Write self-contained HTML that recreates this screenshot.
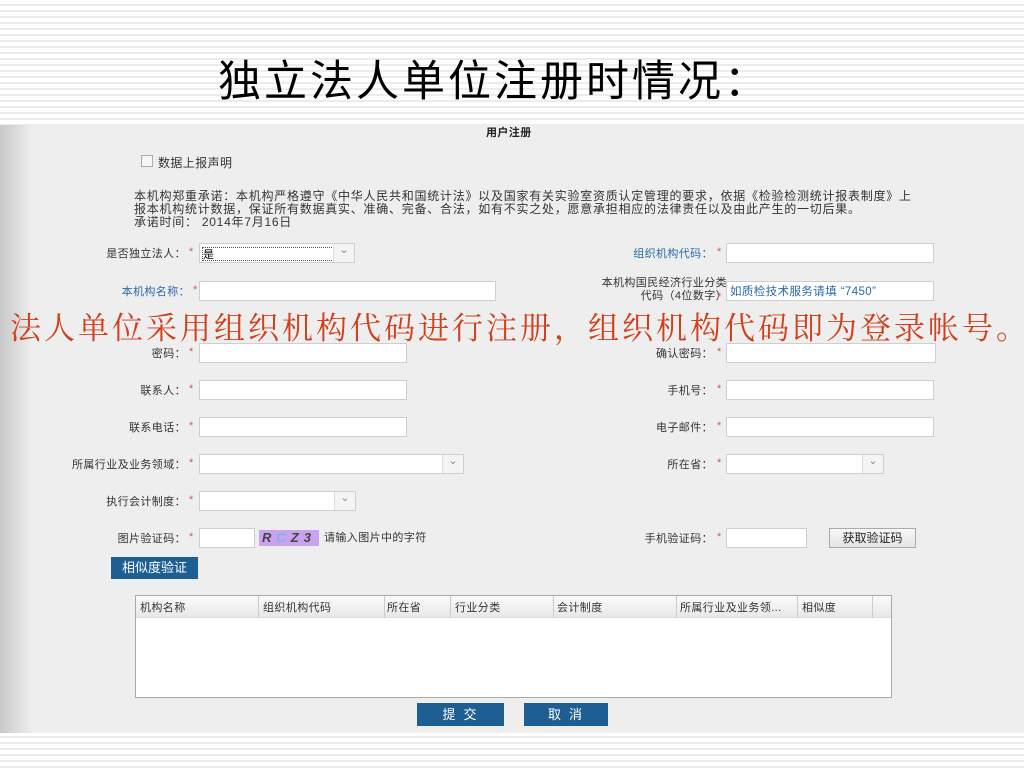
<!DOCTYPE html>
<html><head><meta charset="utf-8"><style>
*{margin:0;padding:0;box-sizing:border-box}
body{width:1024px;height:768px;overflow:hidden;position:relative;font-family:"Liberation Sans","Noto Sans CJK SC",sans-serif;
background:repeating-linear-gradient(to bottom,#fff 0,#fff 4px,#ececec 4px,#ececec 6px);}
.shot{position:absolute;left:0;top:125px;width:1024px;height:608px;background:#eeeeee;}
.shot:before{content:"";position:absolute;left:0;top:0;width:32px;height:100%;background:linear-gradient(to right,#c8c8c8,#eeeeee);}
.t{position:absolute;font-size:11px;color:#333;white-space:nowrap;line-height:14px;letter-spacing:0.4px}
.r{text-align:right}
.b{color:#2a6aa8}
.s{position:absolute;color:#e05050;font-size:11px}
.in{position:absolute;height:20px;background:#fff;border:1px solid #cfcfcf}
.sel:after{content:"⌄";position:absolute;right:0;top:0;width:20px;height:18px;border-left:1px solid #ddd;background:#f4f4f4;color:#888;font-size:11px;text-align:center;line-height:12px}
.btn{position:absolute;background:#1d5f93;color:#fff;font-size:13px;text-align:center}
</style></head><body>
<div style="position:absolute;left:218px;top:52px;font-size:43px;line-height:52px;color:#000;font-family:'Noto Sans CJK SC',sans-serif;letter-spacing:3px">独立法人单位注册时情况：</div>
<div class="shot"></div>
<div class="t" style="left:486px;top:126px;font-weight:bold;color:#222">用户注册</div>
<div style="position:absolute;left:141px;top:155px;width:12px;height:12px;border:1px solid #aaa;background:#f6f6f6"></div>
<div class="t" style="left:158px;top:156px;font-size:12px">数据上报声明</div>
<div class="t" style="left:134px;top:190px;line-height:13px;font-size:12px;letter-spacing:0.75px">本机构郑重承诺：本机构严格遵守《中华人民共和国统计法》以及国家有关实验室资质认定管理的要求，依据《检验检测统计报表制度》上<br>报本机构统计数据，保证所有数据真实、准确、完备、合法，如有不实之处，愿意承担相应的法律责任以及由此产生的一切后果。<br>承诺时间： 2014年7月16日</div>

<!-- rows left -->
<div class="t r" style="right:838px;top:247px">是否独立法人：</div><div class="s" style="left:189px;top:246px">*</div>
<div class="in sel" style="left:199px;top:243px;width:156px"><span class="t" style="left:2px;top:3px;color:#000;border:1px dotted #555;width:132px;height:14px">是</span></div>
<div class="t r b" style="right:834px;top:285px">本机构名称：</div><div class="s" style="left:193px;top:284px">*</div>
<div class="in" style="left:199px;top:281px;width:297px"></div>

<div class="t r" style="right:838px;top:347px">密码：</div><div class="s" style="left:189px;top:346px">*</div>
<div class="in" style="left:199px;top:343px;width:208px"></div>
<div class="t r" style="right:838px;top:384px">联系人：</div><div class="s" style="left:189px;top:383px">*</div>
<div class="in" style="left:199px;top:380px;width:208px"></div>
<div class="t r" style="right:838px;top:421px">联系电话：</div><div class="s" style="left:189px;top:420px">*</div>
<div class="in" style="left:199px;top:417px;width:208px"></div>
<div class="t r" style="right:838px;top:458px">所属行业及业务领域：</div><div class="s" style="left:189px;top:457px">*</div>
<div class="in sel" style="left:199px;top:454px;width:265px"></div>
<div class="t r" style="right:838px;top:495px">执行会计制度：</div><div class="s" style="left:189px;top:494px">*</div>
<div class="in sel" style="left:199px;top:491px;width:157px"></div>
<div class="t r" style="right:838px;top:532px">图片验证码：</div><div class="s" style="left:189px;top:531px">*</div>
<div class="in" style="left:199px;top:528px;width:56px"></div>
<div style="position:absolute;left:259px;top:530px;width:60px;height:16px;background:#c9a3f0;font:italic bold 13px 'Liberation Sans',sans-serif;color:#444;letter-spacing:5px;padding-left:3px;line-height:16px">R<span style="color:#7ab0f0">C</span>Z3</div>
<div class="t" style="left:324px;top:531px">请输入图片中的字符</div>

<!-- rows right -->
<div class="t r b" style="right:311px;top:247px">组织机构代码：</div><div class="s" style="left:717px;top:246px">*</div>
<div class="in" style="left:726px;top:243px;width:208px"></div>
<div class="t r" style="right:297px;top:277px;line-height:13px">本机构国民经济行业分类<br>代码（4位数字）</div><div class="s" style="left:717px;top:291px">*</div>
<div class="in" style="left:726px;top:281px;width:208px"><span class="t b" style="left:3px;top:3px;font-size:11.5px">如质检技术服务请填 “7450”</span></div>
<div class="t r" style="right:311px;top:347px">确认密码：</div><div class="s" style="left:717px;top:346px">*</div>
<div class="in" style="left:726px;top:343px;width:210px"></div>
<div class="t r" style="right:311px;top:384px">手机号：</div><div class="s" style="left:717px;top:383px">*</div>
<div class="in" style="left:726px;top:380px;width:208px"></div>
<div class="t r" style="right:311px;top:421px">电子邮件：</div><div class="s" style="left:717px;top:420px">*</div>
<div class="in" style="left:726px;top:417px;width:208px"></div>
<div class="t r" style="right:311px;top:458px">所在省：</div><div class="s" style="left:717px;top:457px">*</div>
<div class="in sel" style="left:726px;top:454px;width:158px"></div>
<div class="t r" style="right:311px;top:532px">手机验证码：</div><div class="s" style="left:717px;top:531px">*</div>
<div class="in" style="left:726px;top:528px;width:81px"></div>
<div style="position:absolute;left:829px;top:528px;width:87px;height:20px;border:1px solid #aaa;background:linear-gradient(#f8f8f8,#e4e4e4);font-size:12px;text-align:center;line-height:18px;color:#222">获取验证码</div>

<div class="btn" style="left:111px;top:557px;width:87px;height:22px;line-height:22px">相似度验证</div>

<div style="position:absolute;left:135px;top:595px;width:757px;height:103px;background:#fff;border:1px solid #aaa"></div>
<div style="position:absolute;left:136px;top:596px;width:755px;height:22px;background:linear-gradient(#fafafa,#e8e8e8);border-bottom:1px solid #ddd"></div>
<div class="t" style="left:140px;top:601px">机构名称</div>
<div class="t" style="left:263px;top:601px">组织机构代码</div>
<div class="t" style="left:387px;top:601px">所在省</div>
<div class="t" style="left:455px;top:601px">行业分类</div>
<div class="t" style="left:557px;top:601px">会计制度</div>
<div class="t" style="left:680px;top:601px">所属行业及业务领...</div>
<div class="t" style="left:802px;top:601px">相似度</div>
<div style="position:absolute;top:596px;height:22px;left:258px;border-left:1px solid #ccc"></div>
<div style="position:absolute;top:596px;height:22px;left:384px;border-left:1px solid #ccc"></div>
<div style="position:absolute;top:596px;height:22px;left:450px;border-left:1px solid #ccc"></div>
<div style="position:absolute;top:596px;height:22px;left:553px;border-left:1px solid #ccc"></div>
<div style="position:absolute;top:596px;height:22px;left:676px;border-left:1px solid #ccc"></div>
<div style="position:absolute;top:596px;height:22px;left:797px;border-left:1px solid #ccc"></div>
<div style="position:absolute;top:596px;height:22px;left:872px;border-left:1px solid #ccc"></div>

<div class="btn" style="left:417px;top:703px;width:87px;height:23px;line-height:23px;letter-spacing:8px;padding-left:6px">提交</div>
<div class="btn" style="left:524px;top:703px;width:84px;height:23px;line-height:23px;letter-spacing:8px;padding-left:6px">取消</div>

<div style="position:absolute;left:10px;top:307px;font-size:31px;line-height:38px;letter-spacing:3px;color:#d0401c;font-family:'Noto Serif CJK SC',serif;white-space:nowrap">法人单位采用组织机构代码进行注册，组织机构代码即为登录帐号。</div>
</body></html>
